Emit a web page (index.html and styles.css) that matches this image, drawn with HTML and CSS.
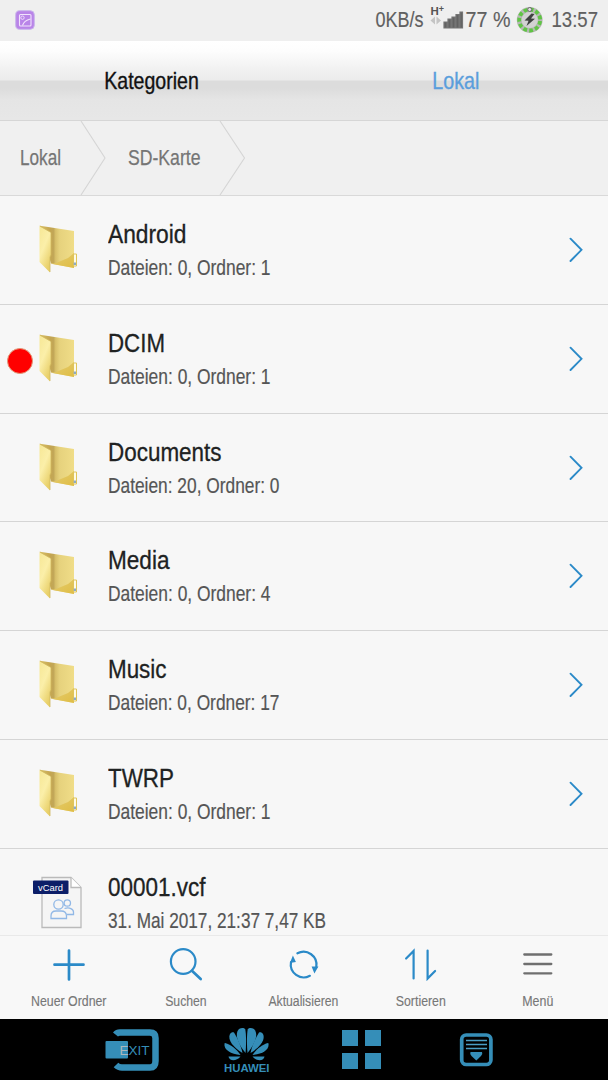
FILE: index.html
```html
<!DOCTYPE html>
<html lang="de">
<head>
<meta charset="utf-8">
<title>Dateien</title>
<link rel="stylesheet" href="styles.css">
</head>
<body>
<svg class="defs" width="0" height="0">
  <defs>
    <linearGradient id="flap" x1="0" y1="0" x2=".6" y2="1"><stop offset="0" stop-color="#f6e795"/><stop offset=".5" stop-color="#fbefa9"/><stop offset="1" stop-color="#e8cf68"/></linearGradient>
    <linearGradient id="back" x1="0" y1="0" x2="1" y2="0"><stop offset="0" stop-color="#d9c066"/><stop offset=".3" stop-color="#c4a550"/><stop offset=".4" stop-color="#c2a758"/><stop offset=".46" stop-color="#d8c06a"/><stop offset=".58" stop-color="#e6d27d"/><stop offset="1" stop-color="#f0dd88"/></linearGradient>
    <linearGradient id="foot" x1="0" y1="0" x2="1" y2="1"><stop offset="0" stop-color="#e3cc70"/><stop offset="1" stop-color="#e0bd45"/></linearGradient>
    <symbol id="folder" viewBox="0 0 40 50">
      <path d="M1 .8 35 6V43L12 38.500Z" fill="url(#back)"/>
      <path d="M17 38 29 33 35 28V43L12 38.800Z" fill="url(#foot)"/>
      <path d="M34.500 29H37.500V41H34.500Z" fill="#fffbe5" stroke="#dfc45b"/>
      <path d="M34.700 37.500H37V40H34.700Z" fill="#8eaac4"/>
      <path d="M.5 1 12 7.500V30L11 32V47.500L.5 37Z" fill="url(#flap)"/>
      <path d="M.8 1 12 7.500V30L11 32V47" fill="none" stroke="#cfb75f" stroke-width=".8"/>
    </symbol>
    <symbol id="chevron" viewBox="0 0 14 26"><path d="M1.500 1.700 12.500 12.800 1.500 24" fill="none" stroke="#2b8ac8" stroke-width="1.900" stroke-linecap="round"/></symbol>
  </defs>
</svg>

<header class="status">
  <svg class="shot" viewBox="0 0 20 20"><rect x=".7" y=".7" width="18.600" height="18.600" rx="4" fill="#b984e8" stroke="#c9b5eb"/><rect x="4.500" y="4.500" width="11.500" height="11.500" rx="1" fill="none" stroke="#f1e3fc" stroke-width="1.100"/><circle cx="7.500" cy="7.700" r="1.700" fill="none" stroke="#f1e3fc" stroke-width=".9"/><path d="M7.500 15.500Q9 10.500 15.500 9" fill="none" stroke="#f1e3fc" stroke-width="1.100"/></svg>
  <svg class="indicators" viewBox="370 0 238 41">
    <g class="t status-text">
      <text x="375.500" y="27" textLength="48" lengthAdjust="spacingAndGlyphs">0KB/s</text>
      <text x="465.500" y="27" textLength="45" lengthAdjust="spacingAndGlyphs">77 %</text>
      <text x="551.500" y="27" textLength="46.500" lengthAdjust="spacingAndGlyphs">13:57</text>
    </g>
    <text class="net" x="430.500" y="15">H<tspan class="plus" dy="-3">+</tspan></text>
    <path d="M430.500 20.500 435 16.500V24.500ZM441 20.500 436.500 16.500V24.500Z" fill="#c4c4c4"/>
    <path d="M444 22h3v6h-3zM448 19h3v9h-3zM452 17h3v11h-3zM456 14.500h3v13.500h-3zM460 12h2.500v16H460z" fill="#626262" stroke="#757575" stroke-width="1.200"/>
    <circle cx="529.700" cy="20" r="8.700" fill="#d2d2d2"/>
    <circle cx="529.700" cy="20" r="10.500" fill="none" stroke="#b5b8b3" stroke-width="4.800"/>
    <circle cx="529.700" cy="20" r="10.500" fill="none" stroke="#5fc544" stroke-width="3.800" stroke-dasharray="3.800 2.197" stroke-dashoffset="-1.100"/>
    <circle cx="529.700" cy="9.500" r="2" fill="#e2e2e2" stroke="#666"/>
    <path d="M531.500 13.500 524.500 20.500 528.500 20.800 526.500 26 535 18.800 531 18.500 534.500 14Z" fill="#3f4240"/>
  </svg>
</header>

<nav class="tabs">
  <svg viewBox="0 0 304 79"><text class="t tab" x="104.300" y="47.800" textLength="94.500" lengthAdjust="spacingAndGlyphs">Kategorien</text></svg>
  <svg viewBox="0 0 304 79"><text class="t tab active" x="128.300" y="47.800" textLength="47" lengthAdjust="spacingAndGlyphs">Lokal</text></svg>
</nav>

<nav class="crumbs">
  <svg viewBox="0 0 608 74">
    <path d="M81 0 105 37 81 74M220 0 244.500 37 220 74" fill="none" stroke="#d5d5d5" stroke-width="1.100"/>
    <text class="t crumb" x="20" y="44" textLength="41" lengthAdjust="spacingAndGlyphs">Lokal</text>
    <text class="t crumb" x="128" y="44" textLength="72.500" lengthAdjust="spacingAndGlyphs">SD-Karte</text>
  </svg>
</nav>

<main class="list">
  <div class="row">
    <svg class="icon"><use href="#folder"/></svg>
    <svg class="text" viewBox="0 0 400 108"><text class="t name" y="47" textLength="78.500" lengthAdjust="spacingAndGlyphs">Android</text><text class="t info" y="79" textLength="162.500" lengthAdjust="spacingAndGlyphs">Dateien: 0, Ordner: 1</text></svg>
    <svg class="go"><use href="#chevron"/></svg>
  </div>
  <div class="row">
    <span class="dot"></span>
    <svg class="icon"><use href="#folder"/></svg>
    <svg class="text" viewBox="0 0 400 108"><text class="t name" y="47" textLength="57" lengthAdjust="spacingAndGlyphs">DCIM</text><text class="t info" y="79" textLength="162.500" lengthAdjust="spacingAndGlyphs">Dateien: 0, Ordner: 1</text></svg>
    <svg class="go"><use href="#chevron"/></svg>
  </div>
  <div class="row">
    <svg class="icon"><use href="#folder"/></svg>
    <svg class="text" viewBox="0 0 400 108"><text class="t name" y="47" textLength="113.500" lengthAdjust="spacingAndGlyphs">Documents</text><text class="t info" y="79" textLength="171.500" lengthAdjust="spacingAndGlyphs">Dateien: 20, Ordner: 0</text></svg>
    <svg class="go"><use href="#chevron"/></svg>
  </div>
  <div class="row">
    <svg class="icon"><use href="#folder"/></svg>
    <svg class="text" viewBox="0 0 400 108"><text class="t name" y="47.300" textLength="61.500" lengthAdjust="spacingAndGlyphs">Media</text><text class="t info" y="79.300" textLength="162.500" lengthAdjust="spacingAndGlyphs">Dateien: 0, Ordner: 4</text></svg>
    <svg class="go"><use href="#chevron"/></svg>
  </div>
  <div class="row">
    <svg class="icon"><use href="#folder"/></svg>
    <svg class="text" viewBox="0 0 400 108"><text class="t name" y="47.300" textLength="58.500" lengthAdjust="spacingAndGlyphs">Music</text><text class="t info" y="79.300" textLength="171.500" lengthAdjust="spacingAndGlyphs">Dateien: 0, Ordner: 17</text></svg>
    <svg class="go"><use href="#chevron"/></svg>
  </div>
  <div class="row">
    <svg class="icon"><use href="#folder"/></svg>
    <svg class="text" viewBox="0 0 400 108"><text class="t name" y="47" textLength="66" lengthAdjust="spacingAndGlyphs">TWRP</text><text class="t info" y="79" textLength="162.500" lengthAdjust="spacingAndGlyphs">Dateien: 0, Ordner: 1</text></svg>
    <svg class="go"><use href="#chevron"/></svg>
  </div>
  <div class="row">
    <svg class="vcard" viewBox="32 876 52 54">
      <path d="M42 877.500H71L81 887.500V927.500H42Z" fill="#f5f5f5" stroke="#bababa" stroke-width="1.300"/>
      <path d="M71 877.500V887.500H81" fill="#fff" stroke="#bababa" stroke-width="1.300"/>
      <rect x="33" y="880.500" width="35.500" height="13.500" rx="1" fill="#0c1e68"/>
      <text class="t badge" x="38" y="890.900" textLength="25" lengthAdjust="spacingAndGlyphs">vCard</text>
      <g fill="none" stroke="#91b8e6" stroke-width="1.300"><circle cx="58.500" cy="904.500" r="4.700"/><path d="M51 918.500V916C51 912.500 53.500 911 56 911H61C64 911 66.500 912.500 66.500 916V918.500Z"/><circle cx="67.300" cy="903" r="3.200"/><path d="M64.500 908.500C69.500 907 73.500 909 73.500 912V914.500H67"/></g>
    </svg>
    <svg class="text" viewBox="0 0 400 108"><text class="t name" y="47" textLength="97.500" lengthAdjust="spacingAndGlyphs">00001.vcf</text><text class="t info" y="79" textLength="218" lengthAdjust="spacingAndGlyphs">31. Mai 2017, 21:37 7,47 KB</text></svg>
  </div>
</main>

<footer class="tools">
  <svg viewBox="10 936 117.300 83"><path d="M69 950.500V979.500M54.500 964.700H83.500" class="line thick"/><text class="t tool" x="31" y="1006.500" textLength="75.500" lengthAdjust="spacingAndGlyphs">Neuer Ordner</text></svg>
  <svg viewBox="127.300 936 117.300 83"><circle cx="183.500" cy="961.500" r="12.300" class="line"/><path d="M192.500 971 201 979" class="line thick"/><text class="t tool" x="165.500" y="1006.500" textLength="41.500" lengthAdjust="spacingAndGlyphs">Suchen</text></svg>
  <svg viewBox="244.600 936 117.300 83"><path d="M297 953.300A13 13 0 0 1 315.900 967M309.500 975.800A13 13 0 0 1 290.600 962" class="line"/><path d="M311.200 966.500H318L314 973.500ZM289.500 963 292.500 955.500 295.500 962Z" fill="#2b8ac8"/><text class="t tool" x="268" y="1006.500" textLength="70" lengthAdjust="spacingAndGlyphs">Aktualisieren</text></svg>
  <svg viewBox="361.900 936 117.300 83"><path d="M413.500 978.500V951L406 958.500M427.500 950.500V978.500L435 971" class="line"/><text class="t tool" x="395.700" y="1006.500" textLength="50" lengthAdjust="spacingAndGlyphs">Sortieren</text></svg>
  <svg viewBox="479.200 936 117.300 83"><path d="M524.500 954.500H551.500M524.500 964H551.500M524.500 973.300H551.500" class="line gray"/><text class="t tool" x="522.500" y="1006.500" textLength="31" lengthAdjust="spacingAndGlyphs">Menü</text></svg>
</footer>

<footer class="nav">
  <svg viewBox="75 1019 115 61"><path d="M115.500 1034.500C118 1031.500 119.500 1032.500 122 1032.500H150Q155.500 1032.500 155.500 1038V1061Q155.500 1067.500 150 1067.500H122C119 1067.500 118 1067 116 1065" fill="none" stroke="#358eb8" stroke-width="6.500"/><rect x="105.500" y="1041" width="22.500" height="17.500" rx="1" fill="#358eb8"/><text class="exit" x="119.500" y="1055" textLength="30" lengthAdjust="spacing"><tspan fill="#aab7bd">E</tspan>XIT</text></svg>
  <svg viewBox="190 1019 115 61">
    <g id="petals" fill="#358eb8"><path d="M245.500 1053C238 1044 234 1034 239 1029 241.500 1027.500 244.500 1027.500 245.300 1029.500 246.300 1035 246.300 1045 245.500 1053Z"/><path d="M242.500 1053C234 1048 227 1040 230 1034 231 1032.500 232.500 1032 234 1032.500 237.500 1038 241 1046 242.500 1053Z"/><path d="M240.500 1055C231 1054 223.500 1050 224.500 1043.500L225 1043C231 1044.500 237 1049.500 240.500 1055Z"/><path d="M240.500 1056.500C236 1062 229 1061 228.500 1056.500Z"/></g>
    <use href="#petals" transform="matrix(-1 0 0 1 493 0)"/>
    <text class="brand" x="224" y="1071.500" textLength="45.500" lengthAdjust="spacingAndGlyphs">HUAWEI</text>
  </svg>
  <svg viewBox="305 1019 115 61"><path d="M342 1030h16v16h-16zM365 1030h16v16h-16zM342 1053h16v16h-16zM365 1053h16v16h-16z" fill="#358eb8"/></svg>
  <svg viewBox="420 1019 115 61"><rect x="461.700" y="1035" width="29.200" height="29.500" rx="4.500" fill="none" stroke="#358eb8" stroke-width="3.700"/><path d="M466 1040.500H487M466 1044.500H487M466 1048.500H487" stroke="#4b9dc4" stroke-width="1.700"/><path d="M470.500 1052H482Q483 1054 481 1056L476.300 1060.500 471.500 1056Q469.500 1054 470.500 1052Z" fill="#358eb8"/></svg>
</footer>
</body>
</html>
```
FILE: styles.css
```css
* { box-sizing: border-box; }
body {
  margin: 0;
  width: 608px;
  height: 1080px;
  overflow: hidden;
  display: flex;
  flex-direction: column;
  background: #f7f7f7;
  font-family: "Liberation Sans Narrow", "Liberation Sans", sans-serif;
}
svg { display: block; flex: none; }
.defs { position: absolute; }
.status {
  height: 41px;
  flex: none;
  display: flex;
  justify-content: space-between;
  padding-left: 15px;
  background: #efefef;
}
.shot { width: 20px; height: 20px; margin-top: 10px; }
.indicators { width: 238px; height: 41px; }
.status-text { font-size: 21.5px; fill: #606060; stroke: #606060; stroke-width: .15px; }
.net { font-size: 11.5px; font-weight: bold; fill: #555; }
.plus { font-size: 9px; }
.tabs {
  height: 80px;
  flex: none;
  display: flex;
  background: linear-gradient(#fff 0, #fdfdfd 10px, #f0f0f0 30px, #ececec 39px, #dcdcdc 40px, #dcdcdc 47px, #e5e5e5 59px, #e7e7e7 78px);
  border-bottom: 1px solid #d6d6d6;
}
.tabs svg { width: 304px; height: 79px; }
.tab { font-size: 23.2px; fill: #111; stroke: #111; stroke-width: .35px; }
.tab.active { fill: #5a9edc; stroke: #5a9edc; }
.crumbs {
  height: 75px;
  flex: none;
  background: #f0f0f0;
  border-bottom: 1px solid #d9d9d9;
}
.crumbs svg { width: 608px; height: 74px; }
.crumb { font-size: 21.5px; fill: #757575; stroke: #757575; stroke-width: .25px; }
.list { height: 739px; flex: none; overflow: hidden; }
.row {
  position: relative;
  height: 108.8px;
  display: flex;
  border-bottom: 1px solid #d5d5d5;
}
.icon { width: 40px; height: 50px; margin: 29px 29.5px 0 38.5px; }
.vcard { width: 52px; height: 54px; margin: 27.5px 24px 0 32px; }
.text { width: 400px; height: 108px; margin-right: 61px; }
.go { width: 14px; height: 26px; margin-top: 41px; }
.name { font-size: 26.2px; fill: #202222; stroke: #202222; stroke-width: .3px; }
.info { font-size: 21.3px; fill: #555; stroke: #555; stroke-width: .2px; }
.badge { font-size: 9.5px; fill: #fff; }
.dot {
  position: absolute;
  left: 7px;
  top: 43.5px;
  width: 26px;
  height: 26px;
  border: 1px solid #e29a78;
  border-radius: 50%;
  background: #f00;
}
.tools {
  height: 84px;
  flex: none;
  display: flex;
  padding-left: 10px;
  background: #f8f8f8;
  border-top: 1px solid #e9e9e9;
}
.tools svg { width: 117.3px; height: 83px; }
.line { fill: none; stroke: #2b8ac8; stroke-width: 2.2px; stroke-linecap: round; }
.thick { stroke-width: 2.7px; }
.gray { stroke: #6f6f6f; stroke-width: 2.3px; }
.tool { font-size: 15.5px; fill: #777; stroke: #777; stroke-width: .15px; }
.nav {
  height: 61px;
  flex: none;
  display: flex;
  padding-left: 75px;
  background: #000;
}
.nav svg { width: 115px; height: 61px; }
.exit { font-size: 13.5px; fill: #358eb8; }
.brand { font-size: 11px; font-weight: bold; fill: #358eb8; }
```
